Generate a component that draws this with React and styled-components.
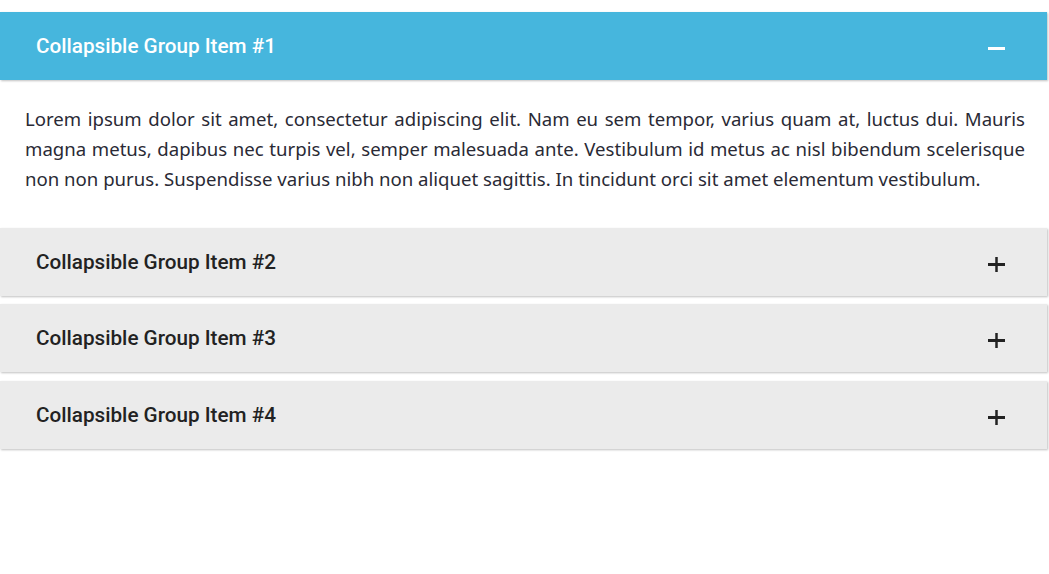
import React, { useState } from 'react';
import styled, { createGlobalStyle } from 'styled-components';

const GlobalStyle = createGlobalStyle`
  html, body {
    margin: 0;
    padding: 0;
    background: #fff;
  }
`;

const items = [
  {
    title: 'Collapsible Group Item #1',
    body:
      'Lorem ipsum dolor sit amet, consectetur adipiscing elit. Nam eu sem tempor, varius quam at, luctus dui. Mauris magna metus, dapibus nec turpis vel, semper malesuada ante. Vestibulum id metus ac nisl bibendum scelerisque non non purus. Suspendisse varius nibh non aliquet sagittis. In tincidunt orci sit amet elementum vestibulum.',
  },
  { title: 'Collapsible Group Item #2', body: 'Anim pariatur cliche reprehenderit, enim eiusmod high life accusamus terry richardson ad squid.' },
  { title: 'Collapsible Group Item #3', body: 'Food truck quinoa nesciunt laborum eiusmod. Brunch 3 wolf moon tempor.' },
  { title: 'Collapsible Group Item #4', body: 'Leggings occaecat craft beer farm-to-table, raw denim aesthetic synth nesciunt.' },
];

const Accordion = styled.div`
  width: 1047px;
  padding-top: 12px;
  display: flex;
  flex-direction: column;
`;

const Panel = styled.div`
  margin-bottom: 8.5px;
`;

const Heading = styled.button`
  display: flex;
  align-items: center;
  justify-content: space-between;
  width: 100%;
  height: 68px;
  padding: 0 42px 0 36px;
  border: none;
  cursor: pointer;
  text-align: left;
  background: ${p => (p.$open ? '#46b6dd' : '#ebebeb')};
  color: ${p => (p.$open ? '#fff' : '#222')};
  box-shadow: 1px 1px 2px rgba(0, 0, 0, 0.25);
  font-family: Roboto, 'Liberation Sans', sans-serif;
  font-weight: 500;
  font-size: 20.7px;

  svg {
    margin-top: 5px;
  }
`;

const Body = styled.div`
  padding: 24px 22px 25px 25px;
  font-family: 'Noto Sans', 'Open Sans', sans-serif;
  font-size: 18.6px;
  line-height: 30px;
  color: #2a2a35;
  text-align: justify;
`;

const Toggle = ({ open }) => (
  <svg width="17" height="17" viewBox="0 0 17 17">
    <line x1="0" y1="8.5" x2="17" y2="8.5" stroke="currentColor" strokeWidth="3" />
    {!open && <line x1="8.5" y1="1" x2="8.5" y2="16" stroke="currentColor" strokeWidth="2.5" />}
  </svg>
);

export default function App() {
  const [open, setOpen] = useState(0);

  return (
    <>
      <GlobalStyle />
      <Accordion>
        {items.map((item, i) => (
          <Panel key={item.title}>
            <Heading $open={open === i} onClick={() => setOpen(open === i ? -1 : i)}>
              {item.title}
              <Toggle open={open === i} />
            </Heading>
            {open === i && <Body>{item.body}</Body>}
          </Panel>
        ))}
      </Accordion>
    </>
  );
}
